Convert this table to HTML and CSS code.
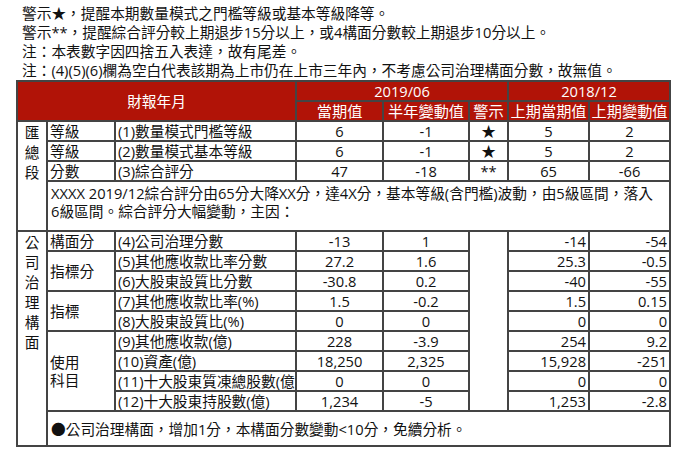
FILE: index.html
```html
<!DOCTYPE html>
<html lang="zh-Hant">
<head>
<meta charset="utf-8">
<link rel="stylesheet" href="styles.css">
</head>
<body>
<div class="notes">
  <p>警示★，提醒本期數量模式之門檻等級或基本等級降等。</p>
  <p>警示**，提醒綜合評分較上期退步15分以上，或4構面分數較上期退步10分以上。</p>
  <p>注：本表數字因四捨五入表達，故有尾差。</p>
  <p>注：(4)(5)(6)欄為空白代表該期為上市仍在上市三年內，不考慮公司治理構面分數，故無值。</p>
</div>
<table class="report">
  <colgroup>
    <col class="c-side"><col class="c-type"><col class="c-item">
    <col class="c-cur"><col class="c-half"><col class="c-warn">
    <col class="c-prev"><col class="c-prevchg">
  </colgroup>
  <thead>
    <tr class="hrow">
      <th colspan="3" rowspan="2">財報年月</th>
      <th colspan="3">2019/06</th>
      <th colspan="2">2018/12</th>
    </tr>
    <tr class="hrow sub">
      <th>當期值</th><th>半年變動值</th><th>警示</th><th>上期當期值</th><th>上期變動值</th>
    </tr>
  </thead>
  <tbody>
    <tr class="row">
      <td rowspan="4" class="side">匯<br>總<br>段</td>
      <td class="lbl">等級</td><td class="lbl">(1)數量模式門檻等級</td>
      <td class="ctr">6</td><td class="ctr">-1</td><td class="ctr">★</td><td class="ctr">5</td><td class="ctr">2</td>
    </tr>
    <tr class="row">
      <td class="lbl">等級</td><td class="lbl">(2)數量模式基本等級</td>
      <td class="ctr">6</td><td class="ctr">-1</td><td class="ctr">★</td><td class="ctr">5</td><td class="ctr">2</td>
    </tr>
    <tr class="row">
      <td class="lbl">分數</td><td class="lbl">(3)綜合評分</td>
      <td class="ctr">47</td><td class="ctr">-18</td><td class="ctr">**</td><td class="ctr">65</td><td class="ctr">-66</td>
    </tr>
    <tr class="remark">
      <td colspan="7" class="text">XXXX 2019/12綜合評分由65分大降XX分，達4X分，基本等級(含門檻)波動，由5級區間，落入6級區間。綜合評分大幅變動，主因：</td>
    </tr>
    <tr class="row">
      <td rowspan="10" class="side">公<br>司<br>治<br>理<br>構<br>面</td>
      <td class="lbl">構面分</td><td class="lbl">(4)公司治理分數</td>
      <td class="ctr">-13</td><td class="ctr">1</td><td rowspan="9" class="blank"></td><td class="rgt">-14</td><td class="rgt">-54</td>
    </tr>
    <tr class="row">
      <td rowspan="2" class="lbl">指標分</td><td class="lbl">(5)其他應收款比率分數</td>
      <td class="ctr">27.2</td><td class="ctr">1.6</td><td class="rgt">25.3</td><td class="rgt">-0.5</td>
    </tr>
    <tr class="row">
      <td class="lbl">(6)大股東設質比分數</td>
      <td class="ctr">-30.8</td><td class="ctr">0.2</td><td class="rgt">-40</td><td class="rgt">-55</td>
    </tr>
    <tr class="row">
      <td rowspan="2" class="lbl">指標</td><td class="lbl">(7)其他應收款比率(%)</td>
      <td class="ctr">1.5</td><td class="ctr">-0.2</td><td class="rgt">1.5</td><td class="rgt">0.15</td>
    </tr>
    <tr class="row">
      <td class="lbl">(8)大股東設質比(%)</td>
      <td class="ctr">0</td><td class="ctr">0</td><td class="rgt">0</td><td class="rgt">0</td>
    </tr>
    <tr class="row">
      <td rowspan="4" class="lbl">使用<br>科目</td><td class="lbl">(9)其他應收款(億)</td>
      <td class="ctr">228</td><td class="ctr">-3.9</td><td class="rgt">254</td><td class="rgt">9.2</td>
    </tr>
    <tr class="row">
      <td class="lbl">(10)資產(億)</td>
      <td class="ctr">18,250</td><td class="ctr">2,325</td><td class="rgt">15,928</td><td class="rgt">-251</td>
    </tr>
    <tr class="row">
      <td class="lbl">(11)十大股東質凍總股數(億)</td>
      <td class="ctr">0</td><td class="ctr">0</td><td class="rgt">0</td><td class="rgt">0</td>
    </tr>
    <tr class="row">
      <td class="lbl">(12)十大股東持股數(億)</td>
      <td class="ctr">1,234</td><td class="ctr">-5</td><td class="rgt">1,253</td><td class="rgt">-2.8</td>
    </tr>
    <tr class="foot">
      <td colspan="7" class="text mid">●公司治理構面，增加1分，本構面分數變動&lt;10分，免續分析。</td>
    </tr>
  </tbody>
</table>
</body>
</html>
```
FILE: styles.css
```css
html, body {
  margin: 0;
  background: #ffffff;
}
body {
  padding: 4px 0 0 16px;
  font-family: "Open Sans", "Noto Sans CJK TC", sans-serif;
  font-size: 14.7px;
  color: #111111;
}
.notes p {
  margin: 0;
  padding-left: 6px;
  line-height: 19px;
  white-space: nowrap;
}
.report {
  border-collapse: collapse;
  table-layout: fixed;
  width: 655px;
}
.c-side { width: 30px; }
.c-type { width: 68px; }
.c-item { width: 181px; }
.c-cur { width: 87px; }
.c-half { width: 86px; }
.c-warn { width: 39px; }
.c-prev { width: 81px; }
.c-prevchg { width: 81px; }

.report th,
.report td {
  border: 2px solid #444444;
  padding: 0 2px;
  line-height: 18px;
  white-space: nowrap;
  overflow: hidden;
  font-weight: normal;
}
.report th {
  background: #b11307;
  color: #ffffff;
  text-align: center;
}
.report .hrow.sub th {
  font-size: 15.2px;
  padding: 0;
}
.hrow { height: 20px; }
.row { height: 20px; }
.remark { height: 50px; }
.foot { height: 35px; }

.report .side {
  text-align: center;
  vertical-align: top;
  line-height: 20px;
}
.report .lbl { text-align: left; padding-left: 2px; }
.report .ctr { text-align: center; }
.report .rgt { text-align: right; padding-right: 2px; }
.report .text {
  white-space: normal;
  vertical-align: top;
  padding: 2px 10px 0 3px;
}
.report .text.mid { vertical-align: middle; padding-top: 0; }
```
